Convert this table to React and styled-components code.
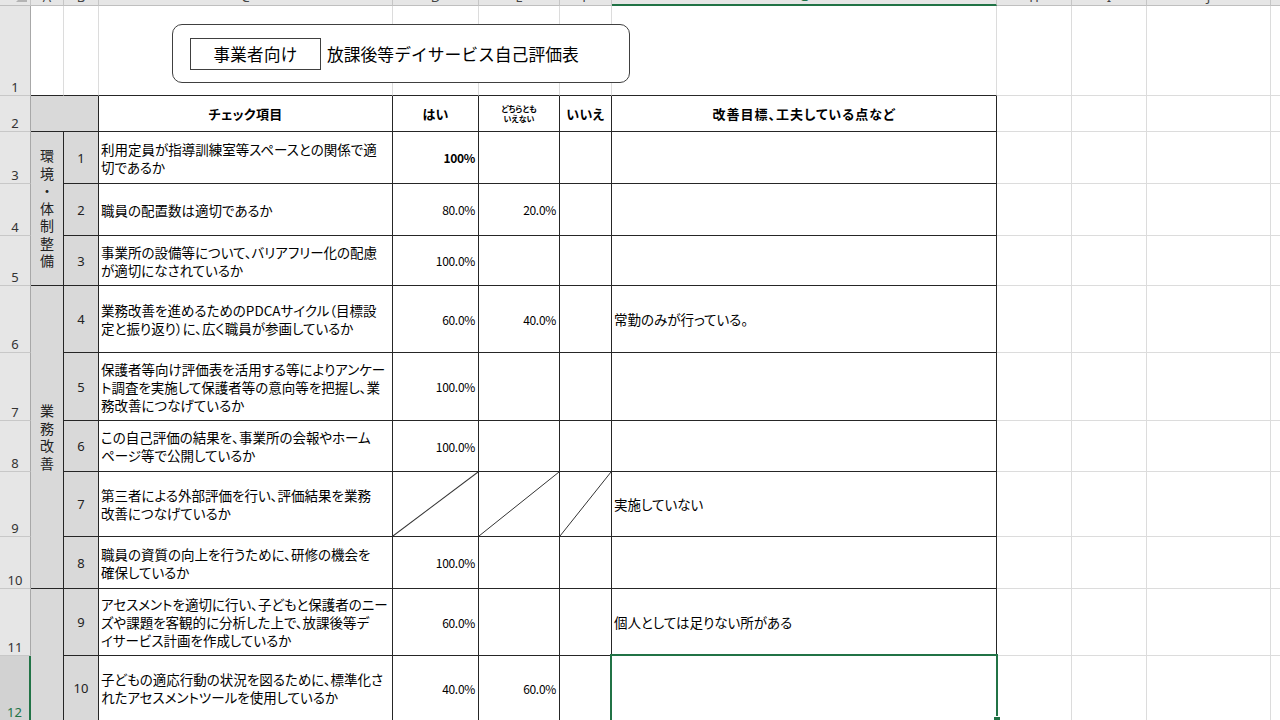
import React from 'react';
import styled, { createGlobalStyle } from 'styled-components';

const GlobalStyle = createGlobalStyle`
  html, body { margin: 0; padding: 0; background: #fff; overflow: hidden; }
  body { font-family: "Noto Sans CJK JP", "Noto Sans", sans-serif; color: #000; }
`;

const COLS = [31, 33, 35, 294, 86, 81, 52, 385, 75, 75, 124, 120];
const ROWS = [20, 90, 36, 52, 52, 50, 67, 68, 51, 65, 52, 67, 65];
const LETTERS = ['A', 'B', 'C', 'D', 'E', 'F', 'G', 'H', 'I', 'J', 'K'];

const GRID = '#dcdcdc';
const LINE = '#262626';
const GREY = '#d9d9d9';
const HEAD = '#e6e6e6';
const GREEN = '#217346';

const Viewport = styled.div`
  width: 1280px;
  height: 720px;
  overflow: hidden;
  background: #fff;
`;

const Sheet = styled.div`
  position: relative;
  display: grid;
  grid-template-columns: ${COLS.map((c) => c + 'px').join(' ')};
  grid-template-rows: ${ROWS.map((r) => r + 'px').join(' ')};
  margin-top: -14px;
`;

const Cell = styled.div`
  grid-row: ${(p) => p.$r} / span ${(p) => p.$rs || 1};
  grid-column: ${(p) => p.$c} / span ${(p) => p.$cs || 1};
  box-sizing: border-box;
  position: relative;
  min-width: 0;
  min-height: 0;
  border-right: 1px solid ${(p) => p.$br || GRID};
  border-bottom: 1px solid ${(p) => p.$bb || GRID};
  background: ${(p) => p.$bg || '#fff'};
`;

const Corner = styled(Cell)`
  background: ${HEAD};
  border-right-color: #c6c6c6;
  border-bottom-color: #bfbfbf;
  &::after {
    content: '';
    position: absolute;
    right: 3px;
    bottom: 3px;
    border-left: 11px solid transparent;
    border-bottom: 11px solid #b4b4b4;
  }
`;

const ColHead = styled(Cell)`
  background: ${HEAD};
  border-right-color: #c6c6c6;
  border-bottom: ${(p) => (p.$active ? `2px solid ${GREEN}` : '1px solid #bfbfbf')};
  display: flex;
  align-items: flex-end;
  justify-content: center;
  overflow: hidden;
  font-family: "Noto Sans", sans-serif;
  font-size: 13px;
  line-height: 15px;
  color: ${(p) => (p.$active ? GREEN : '#444')};
`;

const RowHead = styled(Cell)`
  background: ${(p) => (p.$active ? '#d2d2d2' : HEAD)};
  border-right: ${(p) => (p.$active ? `2px solid ${GREEN}` : '1px solid #a8a8a8')};
  border-bottom-color: #c8c8c8;
  display: flex;
  align-items: flex-end;
  justify-content: center;
  font-family: "Noto Sans", sans-serif;
  font-size: 13px;
  line-height: 15px;
  color: ${(p) => (p.$active ? GREEN : '#333')};
`;

const HeadCell = styled(Cell)`
  display: flex;
  align-items: center;
  justify-content: center;
  font-weight: 700;
  font-size: 13px;
  font-feature-settings: "palt";
  letter-spacing: ${(p) => p.$ls || '0.3px'};
`;

const TinyHead = styled.span`
  display: block;
  font-size: 8px;
  line-height: 10px;
  text-align: center;
  font-weight: 700;
  letter-spacing: 0;
`;

const Category = styled(Cell)`
  display: flex;
  flex-direction: column;
  align-items: center;
  justify-content: center;
  font-size: 14px;
  color: #222;
`;

const VChar = styled.span`
  display: block;
  height: 17.5px;
  line-height: 17.5px;
`;

const NumCell = styled(Cell)`
  display: flex;
  align-items: center;
  justify-content: center;
  font-family: "Noto Sans", sans-serif;
  font-size: 13px;
  color: #222;
`;

const TextCell = styled(Cell)`
  display: flex;
  flex-direction: column;
  justify-content: center;
  padding: 0 2px;
  overflow: hidden;
  font-size: 13.5px;
  line-height: 18px;
  font-feature-settings: "palt";
`;

const Line = styled.span`
  display: block;
  white-space: nowrap;
`;

const PctCell = styled(Cell)`
  display: flex;
  align-items: center;
  justify-content: flex-end;
  padding-right: 3px;
  font-size: 12px;
  font-weight: ${(p) => (p.$bold ? 700 : 400)};
  letter-spacing: -0.3px;
`;

const NoteCell = styled(Cell)`
  display: flex;
  align-items: center;
  padding-left: 2px;
  font-size: 13.5px;
  font-feature-settings: "palt";
  white-space: nowrap;
`;

const Slash = styled.svg`
  position: absolute;
  inset: 0;
  width: 100%;
  height: 100%;
`;

const Selection = styled.div`
  position: absolute;
  top: -2px;
  left: -2px;
  right: -2px;
  bottom: -2px;
  border: 2px solid ${GREEN};
  pointer-events: none;
  z-index: 2;
`;

const FillHandle = styled.div`
  position: absolute;
  right: -5px;
  bottom: -4px;
  width: 6px;
  height: 6px;
  background: ${GREEN};
  border: 1px solid #fff;
`;

const TitleShape = styled.div`
  position: absolute;
  top: 38px;
  left: 172px;
  width: 458px;
  height: 59px;
  box-sizing: border-box;
  border: 1.5px solid #404040;
  border-radius: 10px;
  background: #fff;
  display: flex;
  align-items: center;
  gap: 6px;
  padding-left: 17px;
  z-index: 3;
`;

const TitleTag = styled.div`
  width: 131px;
  height: 32px;
  box-sizing: border-box;
  border: 1px solid #404040;
  display: flex;
  align-items: center;
  justify-content: center;
  font-size: 16.5px;
  letter-spacing: 0.3px;
`;

const TitleText = styled.div`
  font-size: 16.8px;
  white-space: nowrap;
`;

const rows = [
  { n: 1, text: ['利用定員が指導訓練室等スペースとの関係で適', '切であるか'], yes: '100%', bold: true },
  { n: 2, text: ['職員の配置数は適切であるか'], yes: '80.0%', mid: '20.0%' },
  { n: 3, text: ['事業所の設備等について、バリアフリー化の配慮', 'が適切になされているか'], yes: '100.0%' },
  { n: 4, text: ['業務改善を進めるためのPDCAサイクル（目標設', '定と振り返り）に、広く職員が参画しているか'], yes: '60.0%', mid: '40.0%', note: '常勤のみが行っている。' },
  { n: 5, text: ['保護者等向け評価表を活用する等によりアンケー', 'ト調査を実施して保護者等の意向等を把握し、業', '務改善につなげているか'], yes: '100.0%' },
  { n: 6, text: ['この自己評価の結果を、事業所の会報やホーム', 'ページ等で公開しているか'], yes: '100.0%' },
  { n: 7, text: ['第三者による外部評価を行い、評価結果を業務', '改善につなげているか'], slash: true, note: '実施していない' },
  { n: 8, text: ['職員の資質の向上を行うために、研修の機会を', '確保しているか'], yes: '100.0%' },
  { n: 9, text: ['アセスメントを適切に行い、子どもと保護者のニー', 'ズや課題を客観的に分析した上で、放課後等デ', 'イサービス計画を作成しているか'], yes: '60.0%', note: '個人としては足りない所がある' },
  { n: 10, text: ['子どもの適応行動の状況を図るために、標準化さ', 'れたアセスメントツールを使用しているか'], yes: '40.0%', mid: '60.0%', selected: true },
];

const categories = [
  { r: 4, rs: 3, label: '環境・体制整備' },
  { r: 7, rs: 5, label: '業務改善' },
  { r: 12, rs: 2, label: '' },
];

const Diagonal = () => (
  <Slash viewBox="0 0 100 100" preserveAspectRatio="none">
    <line x1="0" y1="100" x2="100" y2="0" stroke="#333" strokeWidth="1" vectorEffect="non-scaling-stroke" />
  </Slash>
);

const GridFill = ({ r }) => (
  <>
    {[9, 10, 11, 12].map((c) => (
      <Cell key={c} $r={r} $c={c} />
    ))}
  </>
);

export default function App() {
  return (
    <Viewport>
      <GlobalStyle />
      <Sheet>
        <Corner $r={1} $c={1} />
        {LETTERS.map((l, i) => (
          <ColHead key={l} $r={1} $c={i + 2} $active={l === 'G'}>{l}</ColHead>
        ))}

        {ROWS.slice(1).map((_, i) => (
          <RowHead key={i} $r={i + 2} $c={1} $active={i + 1 === 12}>{i + 1}</RowHead>
        ))}

        {[2, 3, 4, 5, 6, 7, 8].map((c) => (
          <Cell key={c} $r={2} $c={c} $bb={LINE} />
        ))}
        <GridFill r={2} />

        <Cell $r={3} $c={2} $cs={2} $bg={GREY} $br={LINE} $bb={LINE} />
        <HeadCell $r={3} $c={4} $br={LINE} $bb={LINE}>チェック項目</HeadCell>
        <HeadCell $r={3} $c={5} $br={LINE} $bb={LINE}>はい</HeadCell>
        <HeadCell $r={3} $c={6} $br={LINE} $bb={LINE}>
          <div>
            <TinyHead>どちらとも</TinyHead>
            <TinyHead>いえない</TinyHead>
          </div>
        </HeadCell>
        <HeadCell $r={3} $c={7} $br={LINE} $bb={LINE}>いいえ</HeadCell>
        <HeadCell $r={3} $c={8} $br={LINE} $bb={LINE} $ls="1px">改善目標、工夫している点など</HeadCell>
        <GridFill r={3} />

        {categories.map((cat) => (
          <Category key={cat.r} $r={cat.r} $rs={cat.rs} $c={2} $bg={GREY} $br={LINE} $bb={LINE}>
            {Array.from(cat.label).map((ch, i) => (
              <VChar key={i}>{ch}</VChar>
            ))}
          </Category>
        ))}

        {rows.map((row, i) => {
          const r = i + 4;
          return (
            <React.Fragment key={row.n}>
              <NumCell $r={r} $c={3} $bg={GREY} $br={LINE} $bb={LINE}>{row.n}</NumCell>
              <TextCell $r={r} $c={4} $br={LINE} $bb={LINE}>
                {row.text.map((t, j) => (
                  <Line key={j}>{t}</Line>
                ))}
              </TextCell>
              <PctCell $r={r} $c={5} $br={LINE} $bb={LINE} $bold={row.bold}>
                {row.slash ? <Diagonal /> : row.yes}
              </PctCell>
              <PctCell $r={r} $c={6} $br={LINE} $bb={LINE}>
                {row.slash ? <Diagonal /> : row.mid}
              </PctCell>
              <PctCell $r={r} $c={7} $br={LINE} $bb={LINE}>
                {row.slash ? <Diagonal /> : null}
              </PctCell>
              <NoteCell $r={r} $c={8} $br={LINE} $bb={LINE}>
                {row.note}
                {row.selected && (
                  <Selection>
                    <FillHandle />
                  </Selection>
                )}
              </NoteCell>
              <GridFill r={r} />
            </React.Fragment>
          );
        })}

        <TitleShape>
          <TitleTag>事業者向け</TitleTag>
          <TitleText>放課後等デイサービス自己評価表</TitleText>
        </TitleShape>
      </Sheet>
    </Viewport>
  );
}
